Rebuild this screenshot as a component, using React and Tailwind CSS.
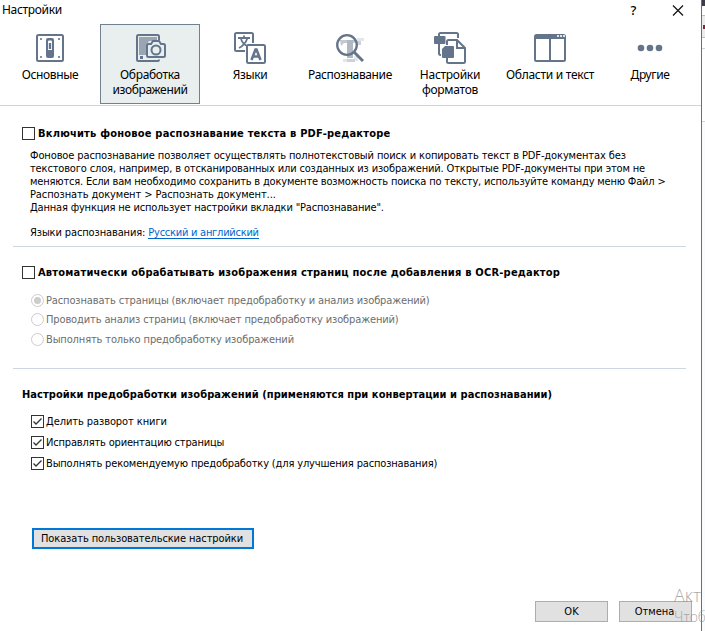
import React from "react";

const INK = "#64748a";

function Switch() {
  return (
    <svg width="28" height="28" viewBox="0 0 28 28" fill="none">
      <rect x="1" y="1" width="26" height="26" rx="1.5" stroke={INK} strokeWidth="2" />
      <rect x="10" y="4" width="8" height="20" rx="2" fill={INK} />
      <path d="M12 16V7.500Q12 6.500 13 6.500H15Q16 6.500 16 7.500V16Z" fill="#fff" />
      <rect x="12.800" y="9" width="2.400" height="6" fill={INK} />
      <path d="M4 4h2v2H4zM22 4h2v2h-2zM4 22h2v2H4zM22 22h2v2h-2z" fill={INK} fillOpacity=".8" />
    </svg>
  );
}

function Camera() {
  return (
    <svg className="ml-px" width="30" height="28" viewBox="0 0 30 28" fill="none">
      <path d="M3 3h18v4H13l-3 5v9H3z" fill="#9aa5b3" />
      <path d="M23 6V2.5Q23 1 21.500 1H2.500Q1 1 1 2.500V25.500Q1 27 2.500 27H21.500Q23 27 23 25.500" stroke={INK} strokeWidth="2" />
      <rect x="4" y="22" width="3" height="3" fill={INK} />
      <path d="M11 11.500Q11 10 12.500 10H15l2-3h6l2 3h2.500Q29 10 29 11.500V21.500Q29 23 27.500 23H12.500Q11 23 11 21.500Z" fill="#e9efef" stroke={INK} strokeWidth="2" />
      <circle cx="20" cy="16" r="4.500" stroke={INK} strokeWidth="2" />
    </svg>
  );
}

function Languages() {
  return (
    <svg width="32" height="32" viewBox="0 0 32 32" fill="none" stroke={INK} strokeWidth="2">
      <path d="M11 19H2.500Q1 19 1 17.500V2.500Q1 1 2.500 1H17.500Q19 1 19 2.500V11" />
      <path d="M4 6h12M10 3.500V6M13.500 6Q11 13 5 16M7 7Q9 13 14 14" strokeWidth="1.800" />
      <rect x="13" y="13" width="18" height="18" rx="1.500" fill="#fff" />
      <path d="M17.500 28L21.500 17.500h1L26.500 28M19 24.500h6" strokeWidth="2.600" />
    </svg>
  );
}

function Magnifier() {
  return (
    <svg width="28" height="30" viewBox="0 0 28 30" fill="none">
      <path d="M4 7h15v3H8l-3 3z" fill="#c3c9d1" />
      <path d="M11 7h6v18h-6z" fill="#b0b8c2" />
      <path d="M21 5h7v3h-7zM7 26h4v3H7zM18 23h4v5h-4z" fill="#e4e7ea" />
      <path d="M21 8h4v4h-4zM11 26h8v3h-8z" fill="#cdd2d8" />
      <circle cx="11" cy="12" r="9.800" stroke={INK} strokeWidth="2.300" />
      <path d="M18 19L27 28" stroke={INK} strokeWidth="3" />
    </svg>
  );
}

function Formats() {
  return (
    <svg width="32" height="32" viewBox="0 0 32 32" fill="none">
      <path d="M5 4V2.500Q5 1 6.500 1H22.500Q24 1 24 2.500V6M5 12V21.500Q5 23 7 23" stroke={INK} strokeWidth="2" />
      <rect y="4" width="11.500" height="8" rx="1" fill={INK} />
      <path d="M13 13V9.500Q13 8 14.500 8H23L31 16V29.500Q31 31 29.500 31H14.500Q13 31 13 29.500V26" stroke={INK} strokeWidth="2" fill="#fff" />
      <path d="M23 8V16H31" stroke={INK} strokeWidth="2" />
      <path d="M11 14H19Q20 14 20 15V25Q20 26 19 26H9Q8 26 8 25V17Z" fill={INK} />
    </svg>
  );
}

function Areas() {
  return (
    <svg width="32" height="28" viewBox="0 0 32 28" fill="none">
      <rect x="1" y="1" width="30" height="26" rx="1.500" stroke={INK} strokeWidth="2" />
      <path d="M1 1h30v4H1zM15 5h2v22h-2z" fill={INK} />
      <path d="M23 1h2v2h-2zM26 1h2v2h-2zM29 1h2v2h-2z" fill="#dfe4e8" />
    </svg>
  );
}

function Dots() {
  return (
    <svg width="26" height="8" viewBox="0 0 26 8" fill={INK}>
      <circle cx="4" cy="4" r="3.300" />
      <circle cx="13" cy="4" r="3.300" />
      <circle cx="22" cy="4" r="3.300" />
    </svg>
  );
}

function Tab({ icon, lines, active }) {
  return (
    <div className={"flex h-20 w-[100px] shrink-0 flex-col items-center border " + (active ? "border-[#71818f] bg-[#e9efef]" : "border-transparent")}>
      <div className="flex h-[42px] w-full shrink-0 items-center justify-center pt-[3px]">{icon}</div>
      {lines.map(([text, tracking]) => (
        <span key={text} className={"whitespace-nowrap font-['Noto_Sans'] text-[12px] leading-[15px] " + tracking}>{text}</span>
      ))}
    </div>
  );
}

function Box({ checked }) {
  return (
    <span className="flex h-[13px] w-[13px] shrink-0 border border-[#333333] bg-white">
      {checked && (
        <svg width="11" height="11" viewBox="0 0 11 11" fill="none">
          <path d="M1.500 5.500L4 8L9.500 2.500" stroke="#333" strokeWidth="1.300" />
        </svg>
      )}
    </span>
  );
}

function Option({ text, tracking, checked, radio, height }) {
  return (
    <div className={"flex items-center gap-[2px] whitespace-nowrap " + height + (radio ? " text-[#6d6d6d]" : "")}>
      {radio ? (
        <span className="flex h-[13px] w-[13px] shrink-0 items-center justify-center rounded-full border border-[#cccccc]">
          {checked && <span className="h-[7px] w-[7px] rounded-full bg-[#cccccc]" />}
        </span>
      ) : (
        <Box checked={checked} />
      )}
      <span className={tracking}>{text}</span>
    </div>
  );
}

const NOTE = [
  ["Фоновое распознавание позволяет осуществлять полнотекстовый поиск и копировать текст в PDF-документах без", "tracking-[-0.115px]"],
  ["текстового слоя, например, в отсканированных или созданных из изображений. Открытые PDF-документы при этом не", "tracking-[-0.15px]"],
  ["меняются. Если вам необходимо сохранить в документе возможность поиска по тексту, используйте команду меню Файл >", "tracking-[-0.185px]"],
  ["Распознать документ > Распознать документ...", "tracking-[-0.1px]"],
  ["Данная функция не использует настройки вкладки \"Распознавание\".", "tracking-[-0.177px]"],
];

export default function App() {
  return (
    <div className="relative flex h-[631px] w-[705px] overflow-hidden bg-white font-['DejaVu_Sans_Condensed','DejaVu_Sans',sans-serif] text-[11px] leading-[13px] text-black">
      <main className="flex h-full w-[701px] shrink-0 flex-col">
        <header className="flex h-6 shrink-0 items-start pl-[2px]">
          <h1 className="w-[625px] font-['Noto_Sans'] text-[12px] leading-[19px] tracking-[-0.33px]">Настройки</h1>
          <span className="w-[13px] text-center font-['Noto_Sans'] text-[13px] font-medium leading-[20px]">?</span>
          <svg className="ml-8 mt-[5px]" width="12" height="11" viewBox="0 0 12 11">
            <path d="M1 .5L11 10.500M11 .5L1 10.500" stroke="#111" strokeWidth="1.200" />
          </svg>
        </header>
        <nav className="flex h-[82px] shrink-0 border-b border-[#cbd5e0]">
          <Tab icon={<Switch />} lines={[["Основные", "tracking-[-0.38px]"]]} />
          <Tab active icon={<Camera />} lines={[["Обработка", "tracking-[-0.33px]"], ["изображений", "tracking-[-0.35px]"]]} />
          <Tab icon={<Languages />} lines={[["Языки", "tracking-[-0.4px]"]]} />
          <Tab icon={<Magnifier />} lines={[["Распознавание", "tracking-[-0.38px]"]]} />
          <Tab icon={<Formats />} lines={[["Настройки", "tracking-[-0.28px]"], ["форматов", "tracking-[-0.28px]"]]} />
          <Tab icon={<Areas />} lines={[["Области и текст", "tracking-[-0.28px]"]]} />
          <Tab icon={<Dots />} lines={[["Другие", "tracking-[-0.35px]"]]} />
        </nav>
        <section className="ml-[13px] h-[141px] w-[673px] shrink-0 border-b border-[#cfd6df] pl-[9px] pt-[21px]">
          <div className="flex items-center gap-[3px] whitespace-nowrap font-bold">
            <Box />
            <span className="tracking-[0.21px]">Включить фоновое распознавание текста в PDF-редакторе</span>
          </div>
          <div className="ml-2 mt-[9px] flex flex-col items-start whitespace-nowrap">
            {NOTE.map(([text, tracking]) => (
              <span key={text} className={tracking}>{text}</span>
            ))}
          </div>
          <div className="ml-2 mt-3 flex gap-[3px] whitespace-nowrap">
            <span className="tracking-[-0.12px]">Языки распознавания:</span>
            <a className="h-[13px] border-b border-[#0066cc] tracking-[-0.25px] text-[#0066cc]">Русский и английский</a>
          </div>
        </section>
        <section className="ml-[13px] h-[122px] w-[673px] shrink-0 border-b border-[#cfd6df] pl-[9px] pt-[19px]">
          <div className="flex items-center gap-[3px] whitespace-nowrap font-bold">
            <Box />
            <span className="tracking-[0.21px]">Автоматически обрабатывать изображения страниц после добавления в OCR-редактор</span>
          </div>
          <div className="ml-[9px] mt-[12px]">
            <Option radio checked height="h-[19px]" text="Распознавать страницы (включает предобработку и анализ изображений)" tracking="tracking-[-0.135px]" />
            <Option radio height="h-[19px]" text="Проводить анализ страниц (включает предобработку изображений)" tracking="tracking-[-0.13px]" />
            <Option radio height="h-[21px]" text="Выполнять только предобработку изображений" tracking="tracking-[-0.13px]" />
          </div>
        </section>
        <section className="ml-[13px] h-[159px] shrink-0 pl-[9px] pt-[19px]">
          <h2 className="whitespace-nowrap font-bold tracking-[0.06px]">Настройки предобработки изображений (применяются при конвертации и распознавании)</h2>
          <div className="ml-[9px] mt-[10px]">
            <Option checked height="h-[21px]" text="Делить разворот книги" tracking="tracking-[-0.08px]" />
            <Option checked height="h-[21px]" text="Исправлять ориентацию страницы" tracking="tracking-[-0.17px]" />
            <Option checked height="h-[21px]" text="Выполнять рекомендуемую предобработку (для улучшения распознавания)" tracking="tracking-[-0.155px]" />
          </div>
        </section>
        <button className="ml-8 h-[21px] w-[222px] shrink-0 whitespace-nowrap border-2 border-[#0078d7] bg-[#e1e1e1] pr-[2px] leading-[17px] tracking-[-0.1px]">Показать пользовательские настройки</button>
        <footer className="mt-[52px] flex shrink-0 gap-[11px] pl-[535px]">
          <button className="h-[21px] w-[73px] border border-[#adadad] bg-[#e1e1e1]">OK</button>
          <button className="h-[21px] w-[73px] border border-[#adadad] bg-[#e1e1e1] pr-[2px]">Отмена</button>
        </footer>
      </main>
      <aside className="flex w-1 flex-col border-l border-[#6e6e6e] bg-white">
        <div className="h-[6px] bg-[#3c3c4b]" />
        <div className="h-[9px]" />
        <div className="flex h-[23px] flex-col items-end justify-center border-y border-[#bdbdbd] bg-[#ececec]">
          <span className="h-1 w-[2px] bg-[#8b2340]" />
        </div>
        <div className="h-[11px] border-b border-[#cbd5e0]" />
        <div className="h-[73px] border-b border-[#cbd5e0]" />
        <div className="flex-1 bg-[#fafbfc]" />
      </aside>
      <div className="absolute left-[674px] top-[584px] whitespace-nowrap font-['Open_Sans'] font-light text-[#8d8d8d]/75">
        <div className="text-[18px] leading-[22px]">Акт</div>
        <div className="text-[14px] leading-[21px]">Чтоб</div>
      </div>
    </div>
  );
}
